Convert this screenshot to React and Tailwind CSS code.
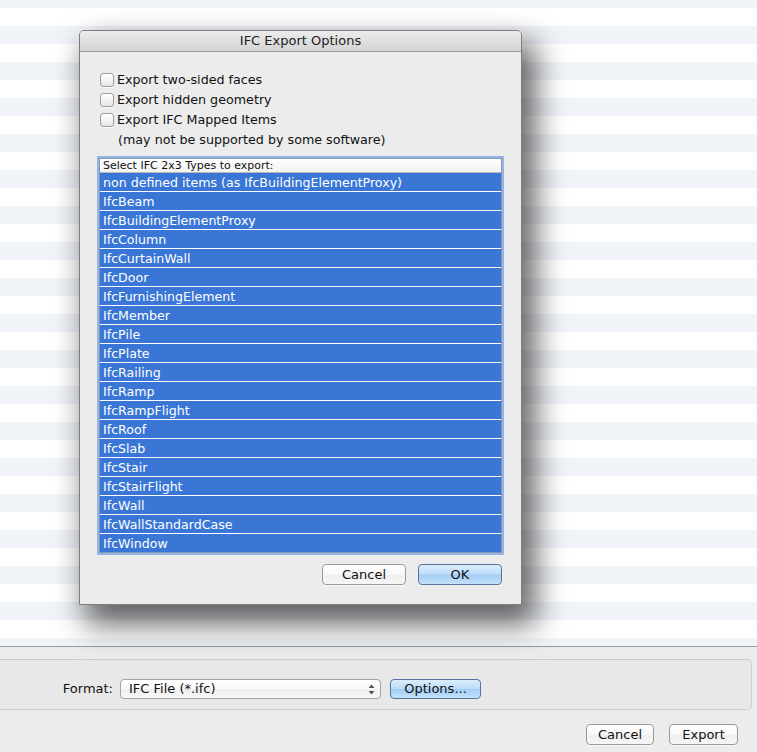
import React from "react";

const items = [
  "non defined items (as IfcBuildingElementProxy)",
  "IfcBeam",
  "IfcBuildingElementProxy",
  "IfcColumn",
  "IfcCurtainWall",
  "IfcDoor",
  "IfcFurnishingElement",
  "IfcMember",
  "IfcPile",
  "IfcPlate",
  "IfcRailing",
  "IfcRamp",
  "IfcRampFlight",
  "IfcRoof",
  "IfcSlab",
  "IfcStair",
  "IfcStairFlight",
  "IfcWall",
  "IfcWallStandardCase",
  "IfcWindow",
];

function Checkbox() {
  return (
    <span className="w-[14px] h-[14px] shrink-0 rounded-[3px] border border-[#9d9d9d] bg-[linear-gradient(to_bottom,#ffffff_0%,#f4f4f4_50%,#e4e4e4_100%)] shadow-[0_1px_0_rgba(255,255,255,0.8)]" />
  );
}

function WhiteButton({ children, className = "" }) {
  return (
    <div
      className={`h-[21px] flex items-center justify-center rounded-[4px] border border-[#9a9a9a] bg-[linear-gradient(to_bottom,#ffffff_0%,#f7f7f7_50%,#eeeeee_51%,#f6f6f6_100%)] shadow-[0_1px_0_rgba(255,255,255,0.6)] text-[13px] text-[#111] ${className}`}
    >
      {children}
    </div>
  );
}

function BlueButton({ children, className = "" }) {
  return (
    <div
      className={`h-[21px] flex items-center justify-center rounded-[4px] border border-[#56739e] bg-[linear-gradient(to_bottom,#dbeefd_0%,#bcdcf8_48%,#a2cdf4_52%,#c4e2fb_100%)] text-[13px] text-[#111] ${className}`}
    >
      {children}
    </div>
  );
}

export default function App() {
  const stripes = Array.from({ length: 36 });
  return (
    <div className="w-[757px] h-[752px] overflow-hidden bg-white font-['DejaVu_Sans',sans-serif] text-[#111]">
      <div className="relative h-[646px]">
        <div className="flex flex-col h-[646px] overflow-hidden">
          <div className="h-[8px] shrink-0 bg-[#f0f3f8]" />
          {stripes.map((_, i) => (
            <div
              key={i}
              className={`h-[18px] shrink-0 ${i % 2 === 0 ? "bg-white" : "bg-[#f0f3f8]"}`}
            />
          ))}
        </div>

        {/* Sheet dialog */}
        <div className="absolute left-[79px] top-[30px] w-[443px] border border-[#7d7d7d] rounded-t-[5px] bg-[#ececec] shadow-[10px_16px_30px_4px_rgba(0,0,0,0.6)]">
          <div className="h-[21px] rounded-t-[4px] border-b border-[#9c9c9c] bg-[linear-gradient(to_bottom,#ececec_0%,#e0e0e0_50%,#d3d3d3_100%)] flex items-center justify-center text-[13px] text-[#222]">
            IFC Export Options
          </div>
          <div className="px-[19px] pt-[18px] pb-[19px]">
            <div className="flex flex-col">
              <label className="h-[20px] flex items-center gap-[3px] pl-[1px] text-[12.7px]">
                <Checkbox />
                <span>Export two-sided faces</span>
              </label>
              <label className="h-[20px] flex items-center gap-[3px] pl-[1px] text-[12.7px]">
                <Checkbox />
                <span>Export hidden geometry</span>
              </label>
              <label className="h-[20px] flex items-center gap-[3px] pl-[1px] text-[12.7px]">
                <Checkbox />
                <span>Export IFC Mapped Items</span>
              </label>
              <div className="h-[19px] flex items-center pl-[19px] text-[12.7px]">
                (may not be supported by some software)
              </div>
            </div>

            <div className="mt-[9px] border border-[#8797b0] shadow-[0_0_0_2px_#93b4e4] bg-white">
              <div className="h-[14px] border-b border-[#b9b9b9] bg-[linear-gradient(to_bottom,#ffffff_0%,#f3f3f3_100%)] pl-[3px] text-[11px] leading-[13px] text-[#111]">
                Select IFC 2x3 Types to export:
              </div>
              {items.map((it, i) => (
                <div
                  key={it}
                  className={`bg-[#3a76d6] text-white text-[12.6px] pl-[3px] leading-[20px] overflow-hidden ${
                    i === items.length - 1 ? "h-[18px]" : "h-[19px] border-b border-white"
                  }`}
                >
                  {it}
                </div>
              ))}
            </div>

            <div className="mt-[11px] flex justify-end gap-[12px]">
              <WhiteButton className="w-[84px]">Cancel</WhiteButton>
              <BlueButton className="w-[84px]">OK</BlueButton>
            </div>
          </div>
        </div>
      </div>

      {/* Bottom panel */}
      <div className="h-[106px] border-t border-[#9a9a9a] bg-[#ececec] flex flex-col">
        <div className="mt-[12px] mr-[5px] h-[51px] border border-l-0 border-[#cdcdcd] rounded-r-[5px] bg-[#e8e8e8] flex items-start pt-[19px]">
          <div className="w-[113px] text-right text-[13px] leading-[20px]">Format:</div>
          <div className="ml-[7px] w-[261px] h-[20px] rounded-[4px] border border-[#a3a3a3] bg-[linear-gradient(to_bottom,#ffffff_0%,#f8f8f8_50%,#efefef_51%,#f7f7f7_100%)] flex items-center pl-[8px] pr-[5px] text-[13px]">
            <span className="flex-1">IFC File (*.ifc)</span>
            <svg width="7" height="11" viewBox="0 0 7 11">
              <path d="M3.5 0.5 L6.5 4 L0.5 4 Z" fill="#555" />
              <path d="M3.5 10.5 L6.5 7 L0.5 7 Z" fill="#555" />
            </svg>
          </div>
          <BlueButton className="ml-[9px] w-[91px] !h-[20px]">Options...</BlueButton>
        </div>
        <div className="mt-[14px] flex justify-end gap-[15px] pr-[19px]">
          <WhiteButton className="w-[68px]">Cancel</WhiteButton>
          <WhiteButton className="w-[69px]">Export</WhiteButton>
        </div>
      </div>
    </div>
  );
}
